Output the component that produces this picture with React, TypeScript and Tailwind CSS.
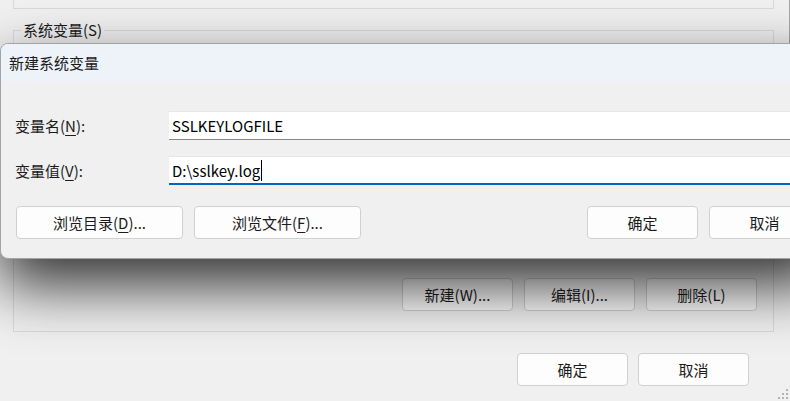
import React from "react";

const FONT = "font-['Noto_Sans_CJK_SC','Noto_Sans',sans-serif]";

function Btn({ children, className = "" }: { children: React.ReactNode; className?: string }) {
  return (
    <div
      className={`flex items-center justify-center h-[33px] rounded-[4px] border border-[#d0d0d0] bg-[#fdfdfd] text-[15px] leading-none text-[#1b1b1b] ${className}`}
    >
      {children}
    </div>
  );
}

function U({ children }: { children: React.ReactNode }) {
  return <span className="underline underline-offset-[3px] decoration-1">{children}</span>;
}

export default function App() {
  return (
    <div className={`relative w-[790px] h-[401px] overflow-hidden bg-[#f0f0f0] ${FONT}`}>
      {/* background window */}
      <div className="flex flex-col">
        <div className="ml-[13px] w-[761px] h-[9px] border-x border-b border-[#d9d9d9]" />
        <div className="relative mt-[21px] ml-[13px] w-[761px] h-[302px] border border-[#d9d9d9] flex flex-col justify-end">
          <span className="absolute -top-[11px] left-[7px] px-[2px] bg-[#f0f0f0] text-[15px] leading-[20px] text-[#1b1b1b]">
            系统变量(S)
          </span>
          <div className="flex justify-end gap-[11px] pr-[16px] pb-[20px]">
            <Btn className="w-[111px]">新建(W)...</Btn>
            <Btn className="w-[111px]">编辑(I)...</Btn>
            <Btn className="w-[111px]">删除(L)</Btn>
          </div>
        </div>
        <div className="flex justify-end gap-[10px] pr-[41px] mt-[21px]">
          <Btn className="w-[111px]">确定</Btn>
          <Btn className="w-[111px]">取消</Btn>
        </div>
      </div>

      {/* window edge at top right */}
      <div className="absolute top-0 right-0 w-px h-[43px] bg-[#a8a8a8]" />

      {/* resize grip */}
      <svg className="absolute right-[1px] bottom-[1px]" width="12" height="12" viewBox="0 0 12 12">
        {[
          [8, 0],
          [8, 4],
          [4, 4],
          [8, 8],
          [4, 8],
          [0, 8],
        ].map(([x, y], i) => (
          <rect key={i} x={x + 1} y={y + 1} width="2" height="2" fill="#b4b4b4" />
        ))}
      </svg>

      {/* dialog */}
      <div className="absolute top-[43px] left-0 w-[830px] h-[216px] rounded-l-[8px] border border-[#a3a3a3] bg-[#f0f0f0] shadow-[0_26px_60px_rgba(0,0,0,0.8)] flex flex-col overflow-hidden">
        <div className="h-[37px] bg-[#eef2f9] flex items-center pl-[8px] text-[15px] leading-none text-[#1b1b1b]">
          新建系统变量
        </div>
        <div className="flex flex-col pt-[30px]">
          <div className="flex items-center h-[29px]">
            <div className="w-[168px] pl-[14px] text-[15px] leading-none text-[#1b1b1b]">
              变量名(<U>N</U>):
            </div>
            <div className="flex-1 h-[29px] bg-white border-t border-[#e6e6e6] border-b border-b-[#868686] flex items-center pl-[3px] text-[15px] leading-none text-black">
              SSLKEYLOGFILE
            </div>
          </div>
          <div className="flex items-center h-[29px] mt-[16px]">
            <div className="w-[168px] pl-[14px] text-[15px] leading-none text-[#1b1b1b]">
              变量值(<U>V</U>):
            </div>
            <div className="flex-1 h-[29px] bg-white border-t border-[#e6e6e6] border-b-2 border-b-[#0067c0] flex items-center pl-[3px] text-[15px] leading-none text-black">
              D:\sslkey.log
              <span className="inline-block w-px h-[21px] bg-black ml-[1px]" />
            </div>
          </div>
          <div className="flex items-center mt-[21px] pl-[15px]">
            <Btn className="w-[167px]">
              浏览目录(<U>D</U>)...
            </Btn>
            <Btn className="w-[167px] ml-[11px]">
              浏览文件(<U>F</U>)...
            </Btn>
            <Btn className="w-[111px] ml-[226px]">确定</Btn>
            <Btn className="w-[111px] ml-[11px]">取消</Btn>
          </div>
        </div>
      </div>
    </div>
  );
}
